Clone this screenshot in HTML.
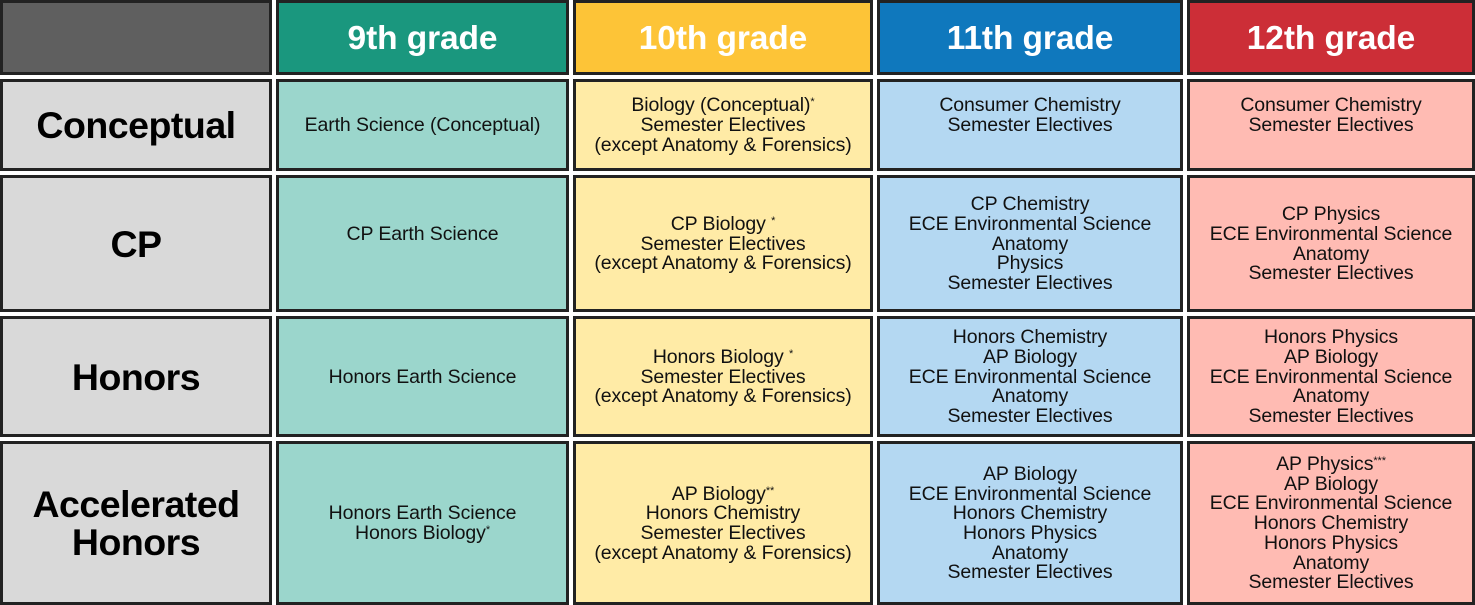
<!DOCTYPE html><html><head><style>
body{margin:0;width:1475px;height:605px;background:#fff;position:relative;overflow:hidden;font-family:"Liberation Sans",sans-serif}
.c{position:absolute;box-sizing:border-box;border:3px solid #222;display:flex;align-items:center;justify-content:center;text-align:center;color:#111;font-size:19.5px;line-height:19.7px;letter-spacing:-0.1px;padding-top:2px}
.c>div{width:100%}
.h{color:#fff;font-weight:bold;font-size:33.5px;line-height:36px}
.l{font-weight:bold;font-size:37.5px;line-height:38px;color:#000;background:#d9d9d9;letter-spacing:-0.5px;padding-top:0}
.g{background:#9bd6cc}.y{background:#ffeba6}.b{background:#b4d8f2}.r{background:#ffbbb3}
sup{font-size:11px;vertical-align:6px;line-height:0}
</style></head><body>
<div class="c" style="left:0;top:0;width:272px;height:75px;background:#5f5f5f"></div>
<div class="c h" style="left:276px;top:0;width:293px;height:75px;background:#1a977e"><div>9th grade</div></div>
<div class="c h" style="left:573px;top:0;width:300px;height:75px;background:#fdc437"><div>10th grade</div></div>
<div class="c h" style="left:877px;top:0;width:306px;height:75px;background:#0f78bd"><div>11th grade</div></div>
<div class="c h" style="left:1187px;top:0;width:288px;height:75px;background:#cc2e37"><div>12th grade</div></div>

<div class="c l" style="left:0;top:79px;width:272px;height:92px"><div>Conceptual</div></div>
<div class="c g" style="left:276px;top:79px;width:293px;height:92px"><div>Earth Science (Conceptual)</div></div>
<div class="c y" style="left:573px;top:79px;width:300px;height:92px"><div>Biology (Conceptual)<sup>*</sup><br>Semester Electives<br>(except Anatomy &amp; Forensics)</div></div>
<div class="c b" style="left:877px;top:79px;width:306px;height:92px"><div style="margin-top:-20px">Consumer Chemistry<br>Semester Electives</div></div>
<div class="c r" style="left:1187px;top:79px;width:288px;height:92px"><div style="margin-top:-20px">Consumer Chemistry<br>Semester Electives</div></div>

<div class="c l" style="left:0;top:175px;width:272px;height:137px"><div>CP</div></div>
<div class="c g" style="left:276px;top:175px;width:293px;height:137px"><div style="margin-top:-20px">CP Earth Science</div></div>
<div class="c y" style="left:573px;top:175px;width:300px;height:137px"><div>CP Biology <sup>*</sup><br>Semester Electives<br>(except Anatomy &amp; Forensics)</div></div>
<div class="c b" style="left:877px;top:175px;width:306px;height:137px"><div>CP Chemistry<br>ECE Environmental Science<br>Anatomy<br>Physics<br>Semester Electives</div></div>
<div class="c r" style="left:1187px;top:175px;width:288px;height:137px"><div>CP Physics<br>ECE Environmental Science<br>Anatomy<br>Semester Electives</div></div>

<div class="c l" style="left:0;top:316px;width:272px;height:121px"><div>Honors</div></div>
<div class="c g" style="left:276px;top:316px;width:293px;height:121px"><div>Honors Earth Science</div></div>
<div class="c y" style="left:573px;top:316px;width:300px;height:121px"><div>Honors Biology <sup>*</sup><br>Semester Electives<br>(except Anatomy &amp; Forensics)</div></div>
<div class="c b" style="left:877px;top:316px;width:306px;height:121px"><div>Honors Chemistry<br>AP Biology<br>ECE Environmental Science<br>Anatomy<br>Semester Electives</div></div>
<div class="c r" style="left:1187px;top:316px;width:288px;height:121px"><div>Honors Physics<br>AP Biology<br>ECE Environmental Science<br>Anatomy<br>Semester Electives</div></div>

<div class="c l" style="left:0;top:441px;width:272px;height:164px"><div>Accelerated<br>Honors</div></div>
<div class="c g" style="left:276px;top:441px;width:293px;height:164px"><div>Honors Earth Science<br>Honors Biology<sup>*</sup></div></div>
<div class="c y" style="left:573px;top:441px;width:300px;height:164px"><div>AP Biology<sup>**</sup><br>Honors Chemistry<br>Semester Electives<br>(except Anatomy &amp; Forensics)</div></div>
<div class="c b" style="left:877px;top:441px;width:306px;height:164px"><div>AP Biology<br>ECE Environmental Science<br>Honors Chemistry<br>Honors Physics<br>Anatomy<br>Semester Electives</div></div>
<div class="c r" style="left:1187px;top:441px;width:288px;height:164px"><div>AP Physics<sup>***</sup><br>AP Biology<br>ECE Environmental Science<br>Honors Chemistry<br>Honors Physics<br>Anatomy<br>Semester Electives</div></div>
</body></html>
